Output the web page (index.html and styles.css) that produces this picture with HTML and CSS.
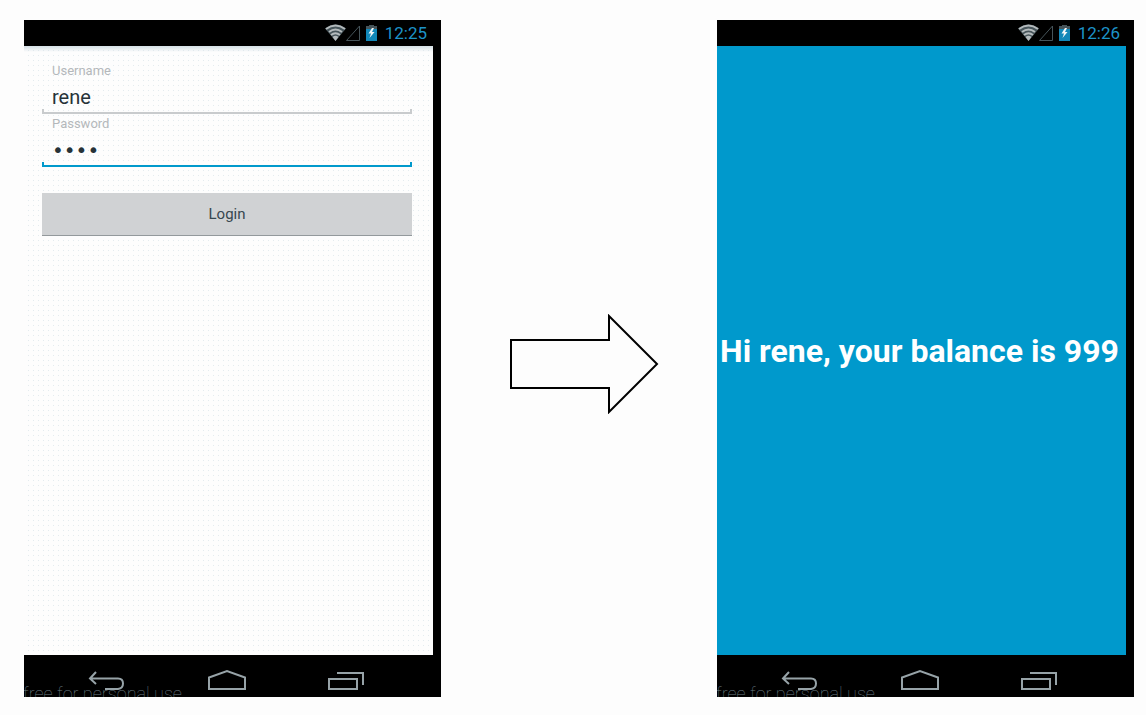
FILE: index.html
```html
<!DOCTYPE html>
<html lang="en">
<head>
<meta charset="utf-8">
<title>Login flow</title>
<link rel="stylesheet" href="styles.css">
</head>
<body>
<svg class="sprite" aria-hidden="true">
  <symbol id="status-icons" viewBox="0 0 54 18">
    <path d="M0 4.500Q10.500 -3.500 21 4.500L10.500 17z" fill="#46545a"/>
    <g fill="none" stroke="#b4babc" stroke-width="2">
      <path d="M1 5Q10.500 -2 20 5"/>
      <path d="M4 8Q10.500 3 17 8"/>
      <path d="M6 11Q10.500 7.500 15 11"/>
    </g>
    <path d="M7.500 13Q10.500 10.500 13.500 13L10.500 17z" fill="#b4babc"/>
    <path d="M21.500 16.500H34.500V2z" fill="none" stroke="#46545a"/>
    <path d="M44 1h5v1h3v4H41V2h3z" fill="#46545a"/>
    <path d="M41 5h11v12H41z" fill="#1187b8"/>
    <path d="M47 4L43.500 9.500H46L44.500 14L49.500 8H47L49 4z" fill="#f2f6f7"/>
  </symbol>
  <symbol id="back" viewBox="0 0 40 24">
    <path d="M9 3L3 9.500L9 15M3 9.500H31Q36 9.500 36 14.500T31 20H18" fill="none" stroke="#97a3a8" stroke-width="2"/>
  </symbol>
  <symbol id="home" viewBox="0 0 40 24">
    <path d="M2 20V8.500L20 2L38 8.500V20z" fill="none" stroke="#97a3a8" stroke-width="2"/>
  </symbol>
  <symbol id="recent" viewBox="0 0 40 24">
    <path d="M2 10H30V20H2zM10 4H36V16" fill="none" stroke="#97a3a8" stroke-width="2"/>
  </symbol>
</svg>

<main class="flow">
  <section class="phone">
    <header class="status">
      <svg class="status-icons" aria-hidden="true"><use href="#status-icons"/></svg>
      <time>12:25</time>
    </header>
    <form class="screen login">
      <label class="label" for="username">Username</label>
      <input class="field" id="username" type="text" value="rene">
      <label class="label" for="password">Password</label>
      <input class="field field-active field-password" id="password" type="password" value="1234">
      <button class="submit" type="button">Login</button>
    </form>
    <nav class="nav">
      <button class="key" type="button" aria-label="Back"><svg class="key-icon"><use href="#back"/></svg></button>
      <button class="key" type="button" aria-label="Home"><svg class="key-icon"><use href="#home"/></svg></button>
      <button class="key" type="button" aria-label="Recent apps"><svg class="key-icon"><use href="#recent"/></svg></button>
      <span class="watermark">free for personal use</span>
    </nav>
  </section>

  <svg class="arrow" viewBox="0 0 150 100" aria-hidden="true">
    <path d="M2 26H100V2L148 50L100 98V74H2z" fill="none" stroke="#000" stroke-width="2"/>
  </svg>

  <section class="phone">
    <header class="status">
      <svg class="status-icons" aria-hidden="true"><use href="#status-icons"/></svg>
      <time>12:26</time>
    </header>
    <div class="screen balance">
      <h1 class="message">Hi rene, your balance is 999</h1>
    </div>
    <nav class="nav">
      <button class="key" type="button" aria-label="Back"><svg class="key-icon"><use href="#back"/></svg></button>
      <button class="key" type="button" aria-label="Home"><svg class="key-icon"><use href="#home"/></svg></button>
      <button class="key" type="button" aria-label="Recent apps"><svg class="key-icon"><use href="#recent"/></svg></button>
      <span class="watermark">free for personal use</span>
    </nav>
  </section>
</main>
</body>
</html>
```
FILE: styles.css
```css
* {
  box-sizing: border-box;
}

body {
  margin: 0;
  background: #fdfdfd;
  font-family: Roboto, "Liberation Sans", sans-serif;
}

.sprite {
  display: none;
}

.flow {
  display: grid;
  grid-template-columns: 417fr 276fr 417fr;
  align-items: center;
  min-height: 100vh;
  padding: 20px 12px 18px 24px;
}

.phone {
  display: flex;
  flex-direction: column;
  align-self: stretch;
  padding-right: 8px;
  background: #000;
}

.arrow {
  justify-self: center;
  width: 150px;
  height: 100px;
  margin: 10px 0 0 10px;
}

.status {
  display: flex;
  align-items: center;
  justify-content: flex-end;
  gap: 6px;
  height: 26px;
  padding-right: 6px;
  color: #1d93c8;
  font-size: 17px;
  line-height: 26px;
}

.status-icons {
  width: 54px;
  height: 18px;
}

.screen {
  flex: 1;
  display: flex;
  flex-direction: column;
}

.login {
  padding: 16px 21px 16px 18px;
  background-color: #fdfdfd;
  background-image:
    linear-gradient(#d5e0e6, #fdfdfd00 6px),
    linear-gradient(90deg, #fdfdfd 4px, transparent 4px),
    linear-gradient(#fdfdfd 4px, #e3ebef 4px);
  background-size: auto, 5px 5px, 5px 5px;
}

.label {
  padding-left: 10px;
  color: #b4b8bb;
  font-size: 13px;
  line-height: 18px;
}

.field {
  --line: #c8cbcd;
  width: 100%;
  height: 34px;
  margin-bottom: 1px;
  padding: 0 10px 1px;
  border: 0;
  outline: 0;
  background:
    linear-gradient(var(--line), var(--line)) bottom / 100% 2px no-repeat,
    linear-gradient(var(--line), var(--line)) left bottom / 2px 5px no-repeat,
    linear-gradient(var(--line), var(--line)) right bottom / 2px 5px no-repeat;
  color: #263238;
  font: 20px Roboto, "Liberation Sans", sans-serif;
}

.field-active {
  --line: #0099cc;
}

.field-password {
  font-family: "DejaVu Sans", sans-serif;
}

.submit {
  height: 43px;
  margin-top: 25px;
  border: 0;
  border-bottom: 1px solid #93999c;
  background: #d0d2d4;
  color: #37474f;
  font: 15px Roboto, "Liberation Sans", sans-serif;
}

.balance {
  align-items: center;
  justify-content: center;
  padding-right: 4px;
  background: #0099cc;
}

.message {
  margin: 0;
  color: #fff;
  font-size: 32px;
  font-weight: 700;
  line-height: 40px;
  white-space: nowrap;
}

.nav {
  position: relative;
  display: flex;
  justify-content: center;
  gap: 80px;
  height: 42px;
  padding: 14px 4px 0 0;
  overflow: hidden;
}

.key {
  width: 40px;
  height: 24px;
  padding: 0;
  border: 0;
  background: none;
}

.key-icon {
  display: block;
  width: 40px;
  height: 24px;
}

.watermark {
  position: absolute;
  left: -1px;
  bottom: -7px;
  color: #6b7c84;
  font-size: 18px;
  font-weight: 100;
  line-height: 20px;
  white-space: nowrap;
}
```
